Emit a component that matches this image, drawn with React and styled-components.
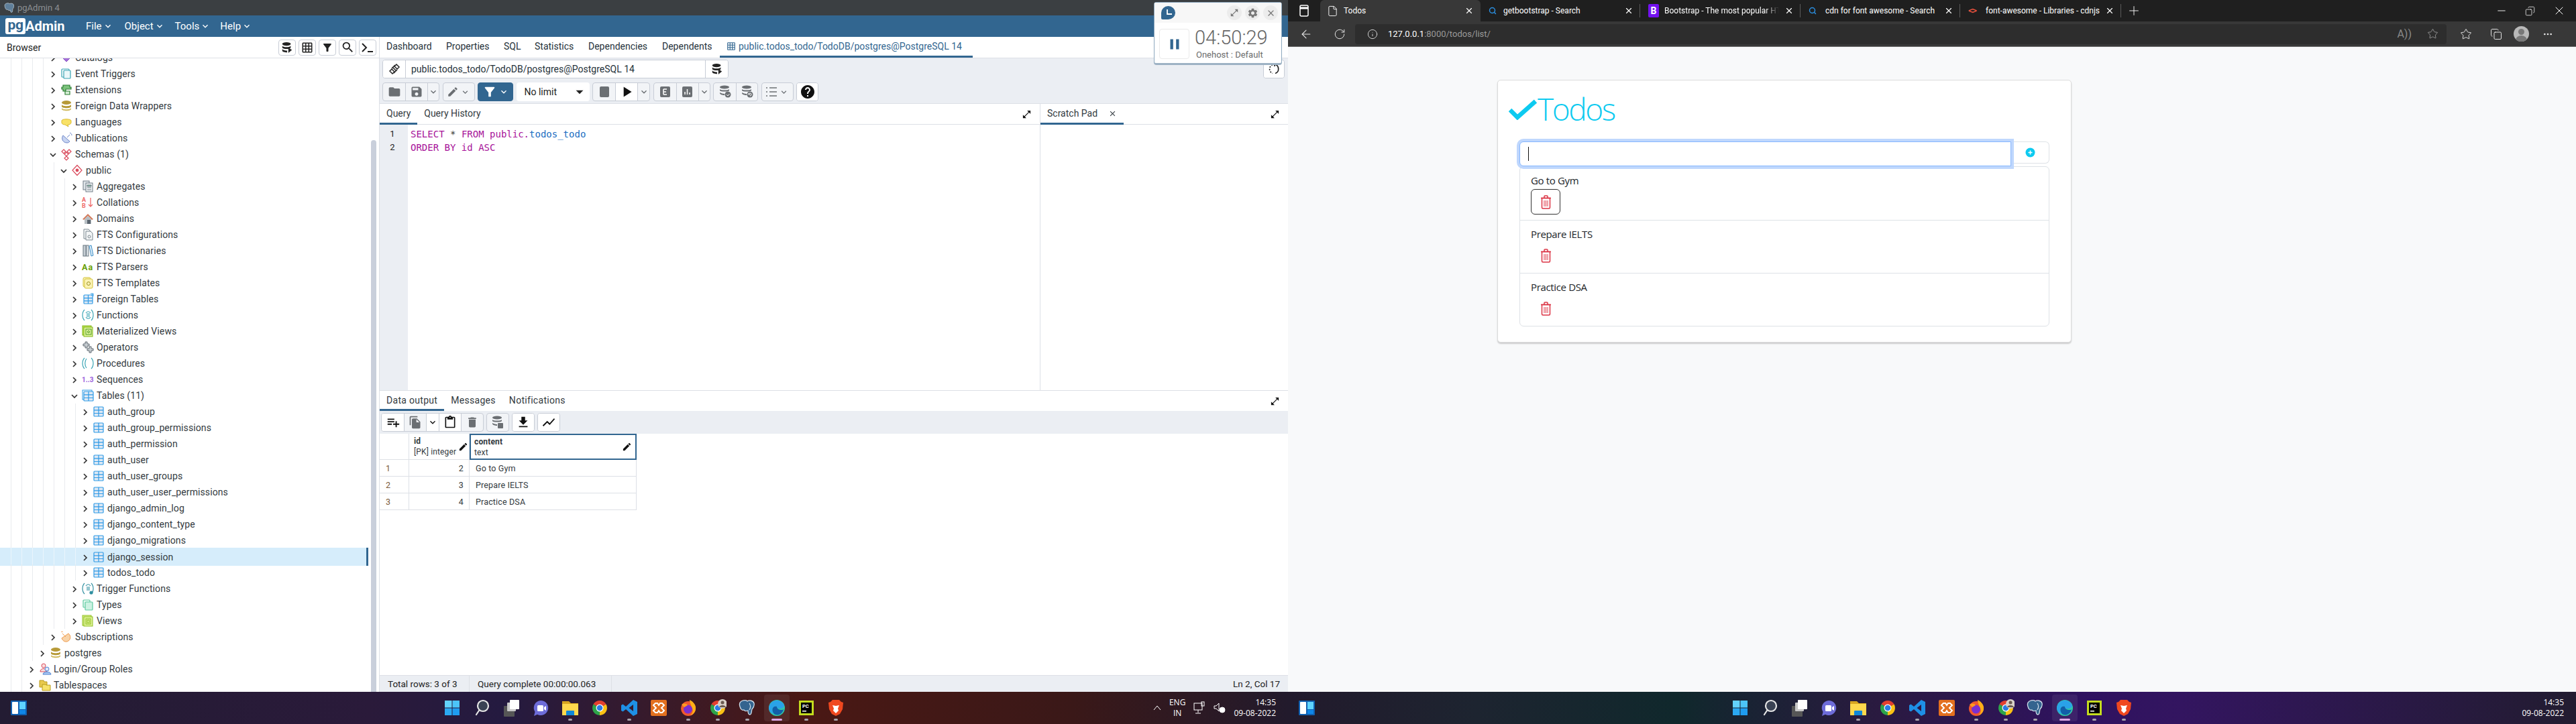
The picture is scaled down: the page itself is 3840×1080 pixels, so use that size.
import React from "react";
import styled, { createGlobalStyle } from "styled-components";
import {
	MdFolder,
	MdSave,
	MdKeyboardArrowDown,
	MdEdit,
	MdPlayArrow,
	MdHelp,
	MdSearch,
	MdDelete,
	MdFileCopy,
	MdContentPaste,
	MdFileDownload,
	MdShowChart,
	MdPlaylistAdd,
	MdGridOn,
	MdSettings,
	MdClose,
	MdPause,
	MdFilterAlt,
	MdOpenInFull,
	MdArrowDropDown,
} from "react-icons/md";
import { ArrowLeft, RotateCw, Info, X, Plus, Minus, Copy, File, Search, Star, Ellipsis } from "lucide-react";

const BLUE = "#326690";
const PANEL = "#ebeef3";
const LINE = "#dde0e6";

const GlobalStyle = createGlobalStyle`
	html, body {
		margin: 0;
		padding: 0;
		background: #000;
	}
	* {
		box-sizing: border-box;
	}
	body {
		font-family: Roboto, "Liberation Sans", sans-serif;
	}
`;

const TREE = [
	{ name: "Catalogs", d: 2, icon: "catalog" },
	{ name: "Event Triggers", d: 2, icon: "event" },
	{ name: "Extensions", d: 2, icon: "ext" },
	{ name: "Foreign Data Wrappers", d: 2, icon: "fdw" },
	{ name: "Languages", d: 2, icon: "lang" },
	{ name: "Publications", d: 2, icon: "pub" },
	{ name: "Schemas (1)", d: 2, icon: "schemas", open: true },
	{ name: "public", d: 3, icon: "public", open: true },
	{ name: "Aggregates", d: 4, icon: "agg" },
	{ name: "Collations", d: 4, icon: "coll" },
	{ name: "Domains", d: 4, icon: "domain" },
	{ name: "FTS Configurations", d: 4, icon: "ftsconf" },
	{ name: "FTS Dictionaries", d: 4, icon: "ftsdict" },
	{ name: "FTS Parsers", d: 4, icon: "parser" },
	{ name: "FTS Templates", d: 4, icon: "ftstpl" },
	{ name: "Foreign Tables", d: 4, icon: "ftable" },
	{ name: "Functions", d: 4, icon: "func" },
	{ name: "Materialized Views", d: 4, icon: "matview" },
	{ name: "Operators", d: 4, icon: "oper" },
	{ name: "Procedures", d: 4, icon: "proc" },
	{ name: "Sequences", d: 4, icon: "seq" },
	{ name: "Tables (11)", d: 4, icon: "tables", open: true },
	{ name: "auth_group", d: 5, icon: "table" },
	{ name: "auth_group_permissions", d: 5, icon: "table" },
	{ name: "auth_permission", d: 5, icon: "table" },
	{ name: "auth_user", d: 5, icon: "table" },
	{ name: "auth_user_groups", d: 5, icon: "table" },
	{ name: "auth_user_user_permissions", d: 5, icon: "table" },
	{ name: "django_admin_log", d: 5, icon: "table" },
	{ name: "django_content_type", d: 5, icon: "table" },
	{ name: "django_migrations", d: 5, icon: "table" },
	{ name: "django_session", d: 5, icon: "table", selected: true },
	{ name: "todos_todo", d: 5, icon: "table" },
	{ name: "Trigger Functions", d: 4, icon: "trigger" },
	{ name: "Types", d: 4, icon: "types" },
	{ name: "Views", d: 4, icon: "views" },
	{ name: "Subscriptions", d: 2, icon: "subs" },
	{ name: "postgres", d: 1, icon: "db" },
	{ name: "Login/Group Roles", d: 0, icon: "roles" },
	{ name: "Tablespaces", d: 0, icon: "space" },
];

const DbStack = ({ c, e }) => (
	<>
		<ellipse cx="10" cy="5" rx="7" ry="3" fill={c} />
		<path d="M3 8c1 3 13 3 14 0v3c-1 3-13 3-14 0z" fill={c} />
		<path d="M3 13c1 3 13 3 14 0v2c-1 3-13 3-14 0z" fill={e || c} />
	</>
);

const TableGrid = ({ x = 3, y = 3, s = 14 }) => (
	<g fill="#dfe9f5" stroke="#2f9be6" strokeWidth="1.2">
		<rect x={x} y={y} width={s} height={s} rx="1" />
		<path d={`M${x} ${y + s * 0.35}h${s}M${x} ${y + s * 0.68}h${s}M${x + s / 2} ${y}v${s}`} fill="none" />
	</g>
);

const TREE_ICONS = {
	catalog: <path d="M10 6l5 5-5 5-5-5z" fill="#a56fd8" stroke="#8450c0" />,
	event: (
		<g fill="none" stroke="#38a3b3" strokeWidth="1.2">
			<rect x="3" y="3" width="11" height="12" rx="1" />
			<rect x="6" y="5" width="10" height="12" rx="1" fill="#eaf7f9" />
		</g>
	),
	ext: (
		<g fill="#7cc37c" stroke="#2c7d33" strokeWidth="1.2">
			<path d="M5 3h10v3h2v3H9v3H5V9H3V6h2z" />
			<path d="M8 12h7v5H8z" fill="#d6efd6" />
		</g>
	),
	fdw: <DbStack c="#b79a38" e="#cfb95e" />,
	lang: <path d="M3 8c0-3 14-3 14 0v3c0 2-3 3-5 3l1 3-5-3c-2 0-5-1-5-3z" fill="#f9e268" stroke="#d9bb32" />,
	pub: (
		<g fill="#c7d4f1" stroke="#6b84c8">
			<path d="M5 6c-3 4-1 11 6 11 2 0 3-1 4-2z" />
			<path d="M11 9l4-4M15 2c2 1 3 2 3 4" fill="none" />
		</g>
	),
	schemas: (
		<g fill="none" stroke="#d9485a" strokeWidth="1.2">
			<path d="M6 3l3 3-3 3-3-3zM14 3l3 3-3 3-3-3zM10 7l3 3-3 3-3-3zM10 13l3 3-3 3-3-3z" />
		</g>
	),
	public: (
		<g stroke="#d9485a" strokeWidth="1.2" fill="none">
			<path d="M10 2.5l7 7.5-7 7.5L3 10z" />
			<circle cx="10" cy="10" r="1.8" fill="#d9485a" />
		</g>
	),
	agg: (
		<g stroke="#6f7b85" fill="#dfe5e8">
			<rect x="3" y="2" width="9" height="13" />
			<rect x="7" y="5" width="10" height="13" fill="#eef2f4" />
			<path d="M9 8h6v2H9zM9 12h6M9 15h6" fill="#7fbf9a" />
		</g>
	),
	coll: (
		<g>
			<text x="1" y="9" fontSize="9" fontWeight="700" fill="#ee6a6a" fontFamily="Roboto">A</text>
			<text x="1" y="18" fontSize="9" fontWeight="700" fill="#ee6a6a" fontFamily="Roboto">B</text>
			<path d="M14 3v13M11 13l3 3 3-3" fill="none" stroke="#ee6a6a" strokeWidth="1.3" />
		</g>
	),
	domain: (
		<g>
			<path d="M2 11l8-8 8 8-2 1-6-6-6 6z" fill="#d47a5a" />
			<path d="M5 11l5-5 5 5v7H5z" fill="#b8bfc4" />
			<rect x="9" y="12" width="5" height="6" fill="#5c6670" />
		</g>
	),
	ftsconf: (
		<g fill="#f4f6f7" stroke="#7d8991">
			<path d="M4 2h7l3 3v11H4z" />
			<path d="M7 5h7l3 3v10H7z" />
			<circle cx="12" cy="13" r="2" fill="none" />
		</g>
	),
	ftsdict: (
		<g stroke="#3f8fc6" fill="#d9ebf8">
			<rect x="3" y="2" width="4" height="16" fill="#c6ced4" stroke="#66747e" />
			<rect x="8" y="2" width="3" height="16" fill="#eef3f6" stroke="#66747e" />
			<path d="M12 3l3-1 3 15-3 1z" />
		</g>
	),
	parser: <text x="1" y="15" fontSize="12.5" fontWeight="700" fill="#6aa008" fontFamily="Roboto" letterSpacing="1">Aa</text>,
	ftstpl: (
		<g fill="#fbf3b5" stroke="#d4c33c">
			<rect x="3" y="2" width="11" height="14" rx="2" />
			<rect x="5" y="4" width="12" height="14" rx="2" />
			<circle cx="11" cy="11" r="2.5" fill="none" stroke="#9c8f20" />
		</g>
	),
	ftable: (
		<g>
			<TableGrid x={4} y={4} s={13} />
			<path d="M14 2h4v4M18 2l-3 3" stroke="#2f9be6" fill="none" />
		</g>
	),
	func: (
		<g fill="none" stroke="#3aa5b5" strokeWidth="1.2">
			<path d="M5 2c-4 4-4 12 0 16M15 2c4 4 4 12 0 16M7 7c2-3 5-3 7 0M7 13c2 3 5 3 7 0" />
			<path d="M8 8h5M8 10h5M8 12h5" />
		</g>
	),
	matview: (
		<g fill="#c6e85c" stroke="#7fb317">
			<rect x="2" y="2" width="13" height="14" />
			<rect x="4" y="4" width="13" height="14" fill="#dff39a" />
			<rect x="7" y="7" width="8" height="8" fill="none" stroke="#4f9a24" />
			<circle cx="11" cy="11" r="1.5" fill="none" stroke="#4f9a24" />
		</g>
	),
	oper: (
		<g fill="#c8ced2" stroke="#616b72">
			<path d="M6 2h3v3h3v3H9v3H6V8H3V5h3z" />
			<path d="M12 9h3v3h3v3h-3v3h-3v-3H9v-3h3z" />
		</g>
	),
	proc: (
		<g fill="none" stroke="#3aa5b5" strokeWidth="1.2">
			<path d="M5 2c-4 4-4 12 0 16M15 2c4 4 4 12 0 16M8 3c-3 4-3 10 0 14" />
		</g>
	),
	seq: <text x="1" y="14" fontSize="10" fontWeight="700" fill="#9a5fdc" fontFamily="Roboto">1..3</text>,
	tables: (
		<g>
			<rect x="2" y="2" width="14" height="14" fill="none" stroke="#2f9be6" />
			<TableGrid x={4} y={4} s={14} />
		</g>
	),
	table: <TableGrid />,
	trigger: (
		<g fill="none" stroke="#2f8fa0" strokeWidth="1.2">
			<path d="M5 2c-4 4-4 12 0 16M15 2c4 4 4 12 0 16M7 6c2-3 5-3 7 0" />
			<path d="M8 8h5M8 10h5M8 12h5" />
			<circle cx="15" cy="16" r="2" fill="#2f8fa0" />
		</g>
	),
	types: (
		<g fill="#e3f8ef" stroke="#5fcaa0" strokeWidth="1.2">
			<rect x="3" y="3" width="10" height="11" rx="1" />
			<rect x="6" y="6" width="11" height="12" rx="1" fill="#cdf2e2" />
		</g>
	),
	views: (
		<g fill="#dff39a" stroke="#90bf1f">
			<rect x="2" y="2" width="13" height="15" />
			<rect x="4" y="4" width="13" height="14" />
			<rect x="7" y="7" width="7" height="8" fill="none" />
			<rect x="9" y="9" width="3" height="4" fill="none" />
		</g>
	),
	subs: (
		<g fill="#f8d3a8" stroke="#ef9a4d">
			<path d="M13 5c4 3 4 10-2 12-4 1-7-2-8-5z" />
			<path d="M9 10L4 5M2 3c1-1 2-1 3 0" fill="none" />
		</g>
	),
	db: <DbStack c="#b79a38" e="#cfb95e" />,
	roles: (
		<g>
			<circle cx="8" cy="5" r="3" fill="#fbe0e0" stroke="#d9485a" />
			<path d="M3 14c0-6 9-6 10 0z" fill="#fbe0e0" stroke="#d9485a" />
			<circle cx="13" cy="10" r="3" fill="#dbe8fb" stroke="#4a7fd0" />
			<path d="M7 18c0-5 12-5 12 0z" fill="#a9c8f2" stroke="#4a7fd0" />
		</g>
	),
	space: (
		<g fill="#f7e26a" stroke="#b89b1c">
			<path d="M2 3h6l1 2h4v8H2z" fill="#e8c94d" />
			<path d="M6 9h5l1 1h6v8H6z" />
		</g>
	),
};

const Screen = styled.div`
	width: 3840px;
	height: 1080px;
	display: flex;
	flex-direction: column;
	overflow: hidden;
`;

const Desktop = styled.div`
	flex: 1;
	display: flex;
	min-height: 0;
`;

const PgWindow = styled.div`
	position: relative;
	width: 1920px;
	display: flex;
	flex-direction: column;
	background: #fff;
`;

const TitleBar = styled.div`
	height: 23px;
	background: #3b3f42;
	display: flex;
	align-items: center;
	gap: 4px;
	padding-left: 6px;
	color: #8b8f92;
	font-size: 13px;
`;

const NavBar = styled.div`
	height: 32px;
	background: ${BLUE};
	display: flex;
	align-items: center;
	padding-left: 8px;
	color: #fff;
`;

const Logo = styled.div`
	width: 120px;
	display: flex;
	align-items: center;
	font-weight: 700;
	font-size: 20px;
`;

const LogoBox = styled.span`
	background: #fff;
	color: ${BLUE};
	width: 30px;
	height: 24px;
	border-radius: 3px;
	line-height: 20px;
	text-align: center;
	font-size: 21px;
	letter-spacing: -0.5px;
`;

const NavMenu = styled.div`
	display: flex;
	align-items: center;
	margin-right: ${(p) => p.$gap}px;
	font-size: 15px;
	svg {
		margin-left: 1px;
	}
`;

const Workspace = styled.div`
	flex: 1;
	display: flex;
	min-height: 0;
`;

const BrowserPane = styled.div`
	width: 566px;
	display: flex;
	flex-direction: column;
	border-right: 1px solid ${LINE};
`;

const PaneHead = styled.div`
	height: 32px;
	flex: none;
	display: flex;
	align-items: center;
	padding: 0 4px 0 10px;
	font-size: 14px;
	color: #222;
	border-bottom: 1px solid ${LINE};
	position: relative;
	z-index: 1;
	background: #fff;
`;

const PaneTitle = styled.span`
	flex: 1;
`;

const HeadTools = styled.div`
	display: flex;
	gap: 4px;
`;

const HeadBtn = styled.div`
	width: 26px;
	height: 24px;
	border: 1px solid #c8cdd6;
	border-radius: 4px;
	display: flex;
	align-items: center;
	justify-content: center;
	color: #222;
	font-size: 18px;
`;

const TreeWrap = styled.div`
	flex: 1;
	min-height: 0;
	display: flex;
`;

const TreeList = styled.div`
	width: 549px;
	overflow: hidden;
	padding-top: 0;
`;

const TreeInner = styled.div`
	margin-top: -13px;
`;

const ScrollGutter = styled.div`
	flex: 1;
	padding: 122px 4px 0;
`;

const ScrollThumb = styled.div`
	height: 100%;
	background: #c9cfdb;
	border-radius: 4px 4px 0 0;
`;

const Row = styled.div`
	display: flex;
	align-items: center;
	height: ${(p) => (p.$selected ? 27 : 24)}px;
	margin: ${(p) => (p.$selected ? "-1px 0 -2px" : "0")};
	padding-left: 16px;
	background: ${(p) => (p.$selected ? "#d6edfb" : "transparent")};
	border-right: ${(p) => (p.$selected ? `3px solid ${BLUE}` : "0")};
	font-size: 14px;
	color: #333a40;
	letter-spacing: 0.1px;
`;

const Indent = styled.span`
	flex: none;
	align-self: stretch;
	width: ${(p) => (p.$short ? 8 : 16)}px;
	border-left: 1px solid ${(p) => (p.$selected ? "#eaf5fc" : "#e9ebee")};
`;

const Chevron = styled.svg`
	flex: none;
	width: 14px;
	height: 14px;
	margin-top: 2px;
`;

const TreeSvg = styled.svg`
	flex: none;
	width: 20px;
	height: 20px;
	margin: 0 3px;
`;

const TreeRow = ({ item }) => {
	const guides = [];
	for (let i = 0; i < item.d + 1; i++) guides.push(<Indent key={i} $selected={item.selected} />);
	return (
		<Row $selected={item.selected}>
			{guides}
			<Indent $short $selected={item.selected} />
			<Chevron viewBox="0 0 14 14" fill="none" stroke="#333" strokeWidth="1.7">
				<path d={item.open ? "M3 5l4 4 4-4" : "M5 3l4 4-4 4"} />
			</Chevron>
			<TreeSvg viewBox="0 0 20 20">{TREE_ICONS[item.icon]}</TreeSvg>
			{item.name}
		</Row>
	);
};

const MainPane = styled.div`
	flex: 1;
	min-width: 0;
	display: flex;
	flex-direction: column;
`;

const MainTabs = styled.div`
	height: 32px;
	flex: none;
	display: flex;
	padding-left: 0;
	border-bottom: 1px solid ${LINE};
`;

const MainTab = styled.div`
	height: 31px;
	display: flex;
	align-items: center;
	gap: 4px;
	padding: 0 10px;
	width: ${(p) => p.$w}px;
	font-size: 14px;
	white-space: nowrap;
	color: ${(p) => (p.$active ? BLUE : "#26323a")};
	border-bottom: 3px solid ${(p) => (p.$active ? BLUE : "transparent")};
`;

const SqlToolbar = styled.div`
	height: 67px;
	flex: none;
	background: ${PANEL};
	display: flex;
	flex-direction: column;
	gap: 6px;
	padding: 2px 5px 0 4px;
`;

const ToolRow = styled.div`
	display: flex;
	align-items: center;
	gap: 4.5px;
`;

const ConnRow = styled(ToolRow)`
	justify-content: space-between;
`;

const ToolGroup = styled.div`
	display: flex;
	height: 28px;
	flex: none;
	background: ${(p) => (p.$primary ? BLUE : "#f2f4f7")};
	border: 1px solid ${(p) => (p.$primary ? BLUE : "#c8cdd6")};
	border-radius: 4px;
	overflow: hidden;
`;

const ToolCell = styled.div`
	width: ${(p) => p.$w}px;
	flex: none;
	display: flex;
	align-items: center;
	justify-content: center;
	gap: 2px;
	font-size: ${(p) => p.$size || 20}px;
	color: ${(p) => (p.$light ? "#fff" : p.$on ? "#111" : "#6b6f73")};
	background: ${(p) => (p.$on ? "#fff" : "transparent")};
	border-left: ${(p) => (p.$first ? "0" : "1px solid #c8cdd6")};
`;

const ConnText = styled.div`
	width: 448px;
	background: #fff;
	border-left: 1px solid #c8cdd6;
	border-right: 1px solid #c8cdd6;
	display: flex;
	align-items: center;
	padding-left: 8px;
	font-size: 14px;
	color: #26323a;
`;

const LimitSelect = styled.div`
	width: 109px;
	height: 28px;
	background: #fff;
	border-radius: 4px;
	display: flex;
	align-items: center;
	justify-content: space-between;
	padding: 0 2px 0 12px;
	font-size: 14px;
	color: #222;
`;

const SqlArea = styled.div`
	flex: 1;
	min-height: 0;
	display: flex;
	border-top: 1px solid ${LINE};
`;

const SubPanel = styled.div`
	width: ${(p) => p.$w}px;
	display: flex;
	flex-direction: column;
	border-left: ${(p) => (p.$divided ? `1px solid ${LINE}` : "0")};
`;

const SubTabs = styled.div`
	height: 31px;
	flex: none;
	display: flex;
	align-items: stretch;
	justify-content: space-between;
	border-bottom: 1px solid ${LINE};
	padding-right: 12px;
`;

const TabGroup = styled.div`
	display: flex;
`;

const SubTab = styled.div`
	display: flex;
	align-items: center;
	gap: 16px;
	height: 31px;
	padding: 0 10px;
	font-size: 14px;
	color: #333a40;
	border-bottom: 3px solid ${(p) => (p.$active ? BLUE : "transparent")};
`;

const ExpandBtn = styled.div`
	display: flex;
	align-items: center;
	font-size: 15px;
	color: #111;
`;

const Editor = styled.div`
	flex: 1;
	display: flex;
	min-height: 0;
`;

const Gutter = styled.div`
	width: 42px;
	background: ${PANEL};
	padding-top: 4px;
`;

const LineNo = styled.div`
	height: 20px;
	line-height: 20px;
	text-align: center;
	font-size: 13px;
	color: #222;
	padding-right: 4px;
`;

const Code = styled.div`
	padding: 4px 0 0 4px;
	font-family: "DejaVu Sans Mono", monospace;
	font-size: 14px;
`;

const CodeLine = styled.div`
	height: 20px;
	line-height: 20px;
	color: #333;
	white-space: pre;
`;

const Keyword = styled.span`
	color: #a8139a;
`;

const Ident = styled.span`
	color: #1b6ec2;
`;

const DataArea = styled.div`
	height: 450px;
	flex: none;
	display: flex;
	flex-direction: column;
	border-top: 1px solid ${LINE};
`;

const DataTabs = styled.div`
	height: 30px;
	flex: none;
	display: flex;
	justify-content: space-between;
	padding-right: 12px;
`;

const DataTab = styled(SubTab)`
	height: 30px;
	letter-spacing: 0.3px;
`;

const DataToolbar = styled.div`
	height: 34px;
	flex: none;
	background: ${PANEL};
	display: flex;
	align-items: center;
	gap: 4px;
	padding-left: 2px;
`;

const GridBox = styled.div`
	flex: 1;
	min-height: 0;
`;

const GridRow = styled.div`
	display: grid;
	grid-template-columns: 44px 90px 249px;
	width: 383px;
	height: ${(p) => (p.$head ? 39 : 25)}px;
	font-size: 12.5px;
	color: #333a40;
	letter-spacing: 0.15px;
`;

const GridCell = styled.div`
	display: flex;
	align-items: center;
	justify-content: ${(p) => (p.$right ? "flex-end" : "flex-start")};
	padding: 0 ${(p) => (p.$right ? 8 : 9)}px;
	border-right: 1px solid ${LINE};
	border-bottom: 1px solid ${LINE};
	color: ${(p) => (p.$num ? "#7a5a3a" : "inherit")};
`;

const HeadCell = styled.div`
	display: flex;
	align-items: center;
	justify-content: space-between;
	padding: 0 ${(p) => (p.$picked ? 5 : 1)}px 0 ${(p) => (p.$picked ? 5 : 7)}px;
	border: ${(p) => (p.$picked ? `2px solid ${BLUE}` : "0")};
	border-right: ${(p) => (p.$picked ? `2px solid ${BLUE}` : `1px solid ${LINE}`)};
	border-bottom: ${(p) => (p.$picked ? `2px solid ${BLUE}` : `1px solid ${LINE}`)};
	font-size: 15px;
	color: #111;
`;

const HeadLabel = styled.div`
	font-size: 12px;
	line-height: 16px;
	color: #333a40;
	white-space: nowrap;
	b {
		display: block;
		font-weight: 700;
	}
`;

const StatusBar = styled.div`
	height: 25px;
	flex: none;
	display: flex;
	background: ${PANEL};
	border-top: 1px solid ${LINE};
	font-size: 13.5px;
	color: #222;
`;

const StatusCell = styled.div`
	display: flex;
	align-items: center;
	padding: 0 12px;
	border-right: ${(p) => (p.$end ? "0" : `1px solid ${LINE}`)};
	margin-left: ${(p) => (p.$end ? "auto" : "0")};
	width: ${(p) => (p.$w ? `${p.$w}px` : "auto")};
`;

const TimerPopup = styled.div`
	position: absolute;
	top: 3px;
	left: 1720px;
	width: 191px;
	height: 94px;
	background: #fff;
	border: 1px solid #8ea9bf;
	border-bottom: 3px solid #9db2c4;
	border-radius: 4px;
	z-index: 5;
`;

const TimerHead = styled.div`
	height: 30px;
	background: #f7f7f7;
	display: flex;
	align-items: center;
	padding: 0 5px 0 10px;
	gap: 5px;
`;

const TimerLogo = styled.div`
	width: 21px;
	height: 20px;
	background: ${BLUE};
	border-radius: 50% 50% 50% 10%;
	margin-right: auto;
	display: flex;
	align-items: center;
	justify-content: center;
`;

const RoundBtn = styled.div`
	width: 22px;
	height: 22px;
	border-radius: 50%;
	background: #ececec;
	display: flex;
	align-items: center;
	justify-content: center;
	color: #777;
	font-size: 14px;
`;

const TimerBody = styled.div`
	display: flex;
	gap: 8px;
	padding: 9px 0 0 7px;
`;

const PauseBtn = styled.div`
	width: 45px;
	height: 45px;
	border: 1px solid #eaeaea;
	border-radius: 4px;
	display: flex;
	align-items: center;
	justify-content: center;
	color: ${BLUE};
	font-size: 26px;
`;

const TimerText = styled.div`
	display: flex;
	flex-direction: column;
`;

const TimerClock = styled.div`
	font-size: 29px;
	font-weight: 300;
	line-height: 32px;
	color: #666;
	margin-top: -3px;
`;

const TimerHost = styled.div`
	font-size: 13px;
	line-height: 16px;
	margin: 2px 0 0 2px;
	color: #6b6b6b;
`;

const EdgeWindow = styled.div`
	width: 1920px;
	display: flex;
	flex-direction: column;
	background: #f8f9fa;
	font-family: "Open Sans", sans-serif;
`;

const TabStrip = styled.div`
	height: 32px;
	flex: none;
	display: flex;
	background: #1f1f1f;
	color: #fff;
`;

const SideBtn = styled.div`
	width: 48px;
	display: flex;
	align-items: center;
	justify-content: center;
`;

const EdgeTab = styled.div`
	position: relative;
	width: ${(p) => p.$w}px;
	flex: none;
	display: flex;
	align-items: center;
	gap: 8px;
	padding: 0 10px 0 ${(p) => (p.$active ? 10 : 12)}px;
	background: ${(p) => (p.$active ? "#383838" : "transparent")};
	border-radius: 6px 6px 0 0;
	font-family: Roboto, sans-serif;
	font-size: 12px;
	&::after {
		content: "";
		display: ${(p) => (p.$active ? "none" : "block")};
		position: absolute;
		right: 0;
		top: 6px;
		bottom: 6px;
		width: 1px;
		background: #5a5a5a;
	}
`;

const TabTitle = styled.span`
	flex: 1;
	min-width: 0;
	white-space: nowrap;
	margin-left: ${(p) => p.$shift || 0}px;
	mask-image: ${(p) => (p.$fade ? "linear-gradient(90deg,#000 88%,transparent)" : "none")};
`;

const BootstrapIcon = styled.span`
	width: 16px;
	height: 20px;
	border-radius: 2px;
	background: #7311f0;
	color: #fff;
	font-size: 14px;
	font-weight: 700;
	line-height: 20px;
	text-align: center;
`;

const CodeGlyph = styled.span`
	width: 16px;
	color: #e8543f;
	font-size: 12px;
	font-weight: 700;
	font-family: "DejaVu Sans Mono", monospace;
	letter-spacing: -1.5px;
`;

const NewTab = styled.div`
	width: 38px;
	display: flex;
	align-items: center;
	justify-content: center;
`;

const WindowBtns = styled.div`
	margin-left: auto;
	display: flex;
	align-items: center;
	gap: 26px;
	padding-right: 15px;
`;

const AddressRow = styled.div`
	height: 38px;
	flex: none;
	display: flex;
	align-items: center;
	background: #383838;
	border-bottom: 1px solid #6b6b6b;
	color: #e6e6e6;
`;

const NavBtn = styled.div`
	width: ${(p) => p.$w}px;
	flex: none;
	display: flex;
	align-items: center;
	justify-content: center;
`;

const AddressBox = styled.div`
	width: 1627px;
	height: 30px;
	flex: none;
	background: #2d2d2d;
	border-radius: 4px;
	display: flex;
	align-items: center;
	padding: 0 12px 0 18px;
	gap: 15px;
	font-family: Roboto, sans-serif;
	font-size: 13px;
`;

const Url = styled.span`
	flex: 1;
	color: #9a9a9a;
	b {
		font-weight: 400;
		color: #fff;
	}
`;

const ReadAloud = styled.span`
	color: #8a8a8a;
	font-size: 16px;
	margin-right: 8px;
`;

const Avatar = styled.div`
	width: 23px;
	height: 23px;
	border-radius: 50%;
	background: #b9b9b9;
	position: relative;
	overflow: hidden;
	margin: 0 12px 0 10px;
	&::before {
		content: "";
		position: absolute;
		left: 7px;
		top: 4px;
		width: 9px;
		height: 9px;
		border-radius: 50%;
		background: #787878;
	}
	&::after {
		content: "";
		position: absolute;
		left: 3px;
		top: 14px;
		width: 17px;
		height: 14px;
		border-radius: 50%;
		background: #787878;
	}
`;

const Page = styled.div`
	flex: 1;
	padding: 49px 0 0 312px;
`;

const Card = styled.div`
	width: 856px;
	height: 392px;
	background: #fff;
	border: 1px solid #dcdcdc;
	border-radius: 5px;
	box-shadow: 0 2px 2px rgba(0, 0, 0, 0.18);
	padding: 0 32px;
`;

const Heading = styled.div`
	height: 81px;
	margin: 0 0 10px -16px;
	padding-top: 2px;
	display: flex;
	align-items: center;
	color: #0dcaf0;
	font-weight: 300;
	font-size: 46px;
	letter-spacing: -2.4px;
`;

const Check = styled.svg`
	width: 43px;
	height: 31px;
	margin-top: 4px;
`;

const InputRow = styled.div`
	display: flex;
	align-items: flex-start;
	height: 37px;
`;

const TaskInput = styled.div`
	position: relative;
	z-index: 1;
	width: 733px;
	height: 37px;
	background: #fff;
	border: 1px solid #86b7fe;
	border-radius: 6px 0 0 6px;
	box-shadow: 0 0 0 4px #bfd7fd;
	display: flex;
	align-items: center;
	padding-left: 12px;
`;

const Caret = styled.span`
	width: 1px;
	height: 21px;
	background: #111;
`;

const AddBtn = styled.div`
	width: 57px;
	height: 33px;
	background: #fff;
	border: 1px solid #dee2e6;
	border-left: 0;
	border-radius: 0 6px 6px 0;
	display: flex;
	align-items: center;
	justify-content: center;
`;

const TodoList = styled.div`
	border: 1px solid #dee2e6;
	border-radius: 6px;
`;

const TodoItem = styled.div`
	height: 79px;
	padding: 8px 16px 0;
	border-top: ${(p) => (p.$first ? "0" : "1px solid #dee2e6")};
`;

const TodoText = styled.div`
	height: 24px;
	line-height: 24px;
	font-size: 15px;
	letter-spacing: -0.35px;
	color: #212529;
`;

const TrashBtn = styled.div`
	width: 44px;
	height: 38px;
	margin-top: 1px;
	border: 1px solid ${(p) => (p.$focus ? "#333" : "transparent")};
	border-radius: 6px;
	display: flex;
	align-items: center;
	justify-content: center;
`;

const Taskbar = styled.div`
	height: 48px;
	flex: none;
	display: flex;
	background: linear-gradient(
		90deg,
		#231c33 0,
		#2a1a3a 550px,
		#241a40 750px,
		#3a1a28 1000px,
		#4a1814 1200px,
		#3a1818 1600px,
		#221a2c 1920px,
		#1d2430 2200px,
		#10282c 2500px,
		#2a1a40 2800px,
		#2f1260 3100px,
		#331560 3250px,
		#221c30 3840px
	);
`;

const TaskSide = styled.div`
	position: relative;
	width: 1920px;
	display: flex;
	align-items: center;
	justify-content: center;
`;

const WidgetBtn = styled.svg`
	position: absolute;
	left: 16px;
	top: 13px;
	width: 24px;
	height: 22px;
`;

const TaskIcons = styled.div`
	display: flex;
`;

const TaskSlot = styled.div`
	position: relative;
	width: 44px;
	height: 48px;
	display: flex;
	align-items: center;
	justify-content: center;
	&::before {
		content: "";
		display: ${(p) => (p.$active ? "block" : "none")};
		position: absolute;
		left: 3px;
		right: 3px;
		top: 4px;
		bottom: 4px;
		border-radius: 4px;
		background: rgba(255, 255, 255, 0.07);
	}
	&::after {
		content: "";
		display: ${(p) => (p.$running || p.$active ? "block" : "none")};
		position: absolute;
		bottom: 5px;
		left: 50%;
		width: ${(p) => (p.$active ? 16 : 6)}px;
		height: 3px;
		margin-left: ${(p) => (p.$active ? -8 : -3)}px;
		border-radius: 2px;
		background: ${(p) => (p.$active ? "#dba6e6" : "#a8a4ac")};
	}
`;

const TaskSvg = styled.svg`
	position: relative;
	width: 26px;
	height: 26px;
`;

const Tray = styled.div`
	position: absolute;
	right: 18px;
	top: 0;
	bottom: 0;
	display: flex;
	align-items: center;
	gap: 12px;
	color: #fff;
	font-family: "Open Sans", sans-serif;
	font-size: 12px;
`;

const TrayLang = styled.div`
	text-align: center;
	line-height: 16px;
`;

const Clock = styled.div`
	text-align: right;
	line-height: 16px;
`;

const TASK_APPS = [
	{
		key: "win",
		art: (
			<g fill="#35b6f5">
				<rect x="2" y="2" width="10.5" height="10.5" fill="#63d2fb" />
				<rect x="13.5" y="2" width="10.5" height="10.5" fill="#4cc4f8" />
				<rect x="2" y="13.5" width="10.5" height="10.5" fill="#2ba9f2" />
				<rect x="13.5" y="13.5" width="10.5" height="10.5" fill="#1f9cf0" />
			</g>
		),
	},
	{
		key: "search",
		art: (
			<g fill="#3a4254" stroke="#e6e6e6" strokeWidth="2.2">
				<circle cx="15" cy="10" r="8" />
				<path d="M9 17l-4 6" strokeLinecap="round" />
			</g>
		),
	},
	{
		key: "view",
		art: (
			<g>
				<rect x="2" y="10" width="16" height="16" rx="1" fill="#565656" />
				<rect x="7" y="5" width="13" height="13" rx="1" fill="#c8c8c8" />
				<rect x="11" y="1" width="14" height="14" rx="1" fill="#fff" />
			</g>
		),
	},
	{
		key: "teams",
		art: (
			<g>
				<path d="M13 2a11 11 0 1 1-5 20.7L3 25l1.500-6A11 11 0 0 1 13 2z" fill="#6d6cd8" />
				<rect x="8" y="9" width="9" height="9" rx="1.500" fill="#fff" />
				<path d="M18 12l3-2v7l-3-2z" fill="#fff" />
			</g>
		),
	},
	{
		key: "files",
		running: true,
		art: (
			<g>
				<path d="M1 3h10l3 3h11v4H1z" fill="#d8a520" />
				<rect x="1" y="7" width="24" height="17" fill="#ffd84d" />
				<path d="M8 17h10a1 1 0 0 1 1 1v6H7v-6a1 1 0 0 1 1-1z" fill="#0f87d8" />
			</g>
		),
	},
	{ key: "chrome", chrome: true },
	{
		key: "code",
		running: true,
		art: (
			<path
				fillRule="evenodd"
				d="M19 1l6 3v18l-6 3L8 15l-4.500 3.500L1 17V9l2.500-1.500L8 11zM19 8l-6.500 5 6.500 5z"
				fill="#1e90e6"
			/>
		),
	},
	{
		key: "xampp",
		art: (
			<g>
				<rect x="1" y="1" width="24" height="24" rx="2" fill="#e3701f" />
				<path d="M8 6h3l2 3 2-3h3l3 3-4 4 4 4-3 3h-3l-2-3-2 3H8l-3-3 4-4-4-4z" fill="none" stroke="#fff" strokeWidth="2" />
			</g>
		),
	},
	{
		key: "firefox",
		running: true,
		art: (
			<g>
				<circle cx="13" cy="14" r="11" fill="#f0582e" />
				<path d="M15 1c6 3 10 8 9 14-1 5-4 8-8 9 4-3 5-8 2-12-1-4-3-7-3-11z" fill="#ffb017" />
				<circle cx="12.500" cy="15" r="6.500" fill="#7a2fd0" />
				<path d="M3 8c3-2 7-2 9 1l-5 3z" fill="#ff9a20" />
			</g>
		),
	},
	{ key: "chrome2", chrome: true, running: true, badge: true },
	{
		key: "pg",
		running: true,
		art: (
			<g fill="#34648f" stroke="#cfdde8" strokeWidth="1.300">
				<path d="M4 3c5-2 8-1 9 0 3-2 9-1 10 3 1 5-2 8-3 9-1 2 0 7-3 8-3 0-3-3-3-6-3 1-5 1-6-1-3 1-5-1-6-5C1 8 1 5 4 3z" />
				<path d="M16 6c2 3 2 7 0 10" fill="none" />
			</g>
		),
	},
	{
		key: "edge",
		active: true,
		art: (
			<g>
				<circle cx="13" cy="13" r="12" fill="#2fc6a8" />
				<path d="M1 13A12 12 0 0 1 24 9c0 3-3 5-7 5-3 0-4-1-4-3C7 9 4 16 9 22 4 21 1 17 1 13z" fill="#2aa2e8" />
				<path d="M9 22C4 16 7 9 13 11c0 3 3 5 7 5 1 0 2 0 3-1-1 6-8 11-14 7z" fill="#125ea8" />
			</g>
		),
	},
	{
		key: "pycharm",
		running: true,
		art: (
			<g>
				<rect x="2" y="2" width="22" height="22" fill="#c4dc1e" />
				<rect x="5" y="5" width="16" height="16" fill="#000" />
				<text x="7" y="13" fontSize="7.500" fontFamily="Roboto" fontWeight="700" fill="#fff">PC</text>
				<rect x="7" y="17" width="6" height="1.500" fill="#fff" />
			</g>
		),
	},
	{
		key: "brave",
		running: true,
		art: (
			<g>
				<path d="M8 1h10l3 3 3 1-1 10-4 7-6 3-6-3-4-7L2 5l3-1z" fill="#f0481f" />
				<path d="M8 9l5 1 5-1-2 5 1 3-4 4-4-4 1-3z" fill="#fff" />
			</g>
		),
	},
];

const ChromeArt = ({ badge }) => (
	<>
		<g transform="translate(1 1)">
			<path d="M12 12L2.500 6.500A11 11 0 0 1 21.500 6.500Z" fill="#e3402f" />
			<path d="M12 12L21.500 6.500A11 11 0 0 1 12 23Z" fill="#fbc114" />
			<path d="M12 12L12 23A11 11 0 0 1 2.500 6.500Z" fill="#2da44a" />
			<circle cx="12" cy="12" r="5.500" fill="#fff" />
			<circle cx="12" cy="12" r="4.300" fill="#2c7ce5" />
		</g>
		{badge && (
			<g>
				<circle cx="20" cy="7" r="7" fill="#d8d0c8" />
				<circle cx="20" cy="5" r="2.500" fill="#6a5a50" />
				<path d="M15 12c1-4 9-4 10 0z" fill="#6a5a50" />
			</g>
		)}
	</>
);

const TaskApps = () => (
	<TaskIcons>
		{TASK_APPS.map((app) => (
			<TaskSlot key={app.key} $running={app.running} $active={app.active}>
				<TaskSvg viewBox="0 0 26 26">{app.chrome ? <ChromeArt badge={app.badge} /> : app.art}</TaskSvg>
			</TaskSlot>
		))}
	</TaskIcons>
);

const Widgets = () => (
	<WidgetBtn viewBox="0 0 24 22">
		<rect width="24" height="22" rx="1" fill="#0f5fb0" />
		<rect x="2" y="2" width="9" height="18" rx="1" fill="#fff" />
		<rect x="13" y="2" width="9" height="11" fill="#5fd4ff" />
		<rect x="13" y="14" width="9" height="6" fill="#0f86e8" />
	</WidgetBtn>
);

const DbRun = () => (
	<svg width="18" height="18" viewBox="0 0 20 20" fill="#222">
		<ellipse cx="9" cy="4" rx="7" ry="3" />
		<path d="M2 7c1 3 13 3 14 0v3c-1 3-13 3-14 0z" />
		<path d="M2 12c1 3 6 3 8 3v3c-4 0-8-1-8-3z" />
		<path d="M12 10l6 4-6 5z" />
	</svg>
);

const Trash = () => (
	<svg width="17" height="21" viewBox="0 0 17 21" fill="none" stroke="#dc3545" strokeWidth="1.500">
		<path d="M1 4.500h15M6 4.500V2a1 1 0 0 1 1-1h3a1 1 0 0 1 1 1v2.500" />
		<path d="M2.500 4.500v14a1.500 1.500 0 0 0 1.500 1.500h9a1.500 1.500 0 0 0 1.500-1.500v-14z" />
		<path d="M6 8v9M8.500 8v9M11 8v9" strokeWidth="1" />
	</svg>
);

const TODOS = ["Go to Gym", "Prepare IELTS", "Practice DSA"];
const RESULT = [
	{ n: 1, id: 2, text: "Go to Gym" },
	{ n: 2, id: 3, text: "Prepare IELTS" },
	{ n: 3, id: 4, text: "Practice DSA" },
];
const MAIN_TABS = [
	["Dashboard", 89],
	["Properties", 86],
	["SQL", 46],
	["Statistics", 80],
	["Dependencies", 110],
	["Dependents", 96],
];

const App = () => {
	return (
		<Screen>
			<GlobalStyle />
			<Desktop>
				<PgWindow>
					<TitleBar>
						<svg width="16" height="18" viewBox="0 0 20 20" fill="#5f7f9a" stroke="#b9c4cc">
							<path d="M3 2c4-2 6-1 7 0 3-1 7-1 8 2 1 4-1 7-2 8 0 3 0 6-2 6s-2-2-2-4c-3 1-4 0-5-1-2 1-4-1-5-4C1 6 1 3 3 2z" />
						</svg>
						pgAdmin 4
					</TitleBar>
					<NavBar>
						<Logo>
							<LogoBox>pg</LogoBox>
							Admin
						</Logo>
						<NavMenu $gap={17}>File<MdKeyboardArrowDown size={16} /></NavMenu>
						<NavMenu $gap={15}>Object<MdKeyboardArrowDown size={16} /></NavMenu>
						<NavMenu $gap={14}>Tools<MdKeyboardArrowDown size={16} /></NavMenu>
						<NavMenu $gap={0}>Help<MdKeyboardArrowDown size={16} /></NavMenu>
					</NavBar>
					<Workspace>
						<BrowserPane>
							<PaneHead>
								<PaneTitle>Browser</PaneTitle>
								<HeadTools>
									<HeadBtn><DbRun /></HeadBtn>
									<HeadBtn><MdGridOn /></HeadBtn>
									<HeadBtn><MdFilterAlt /></HeadBtn>
									<HeadBtn><MdSearch size={21} /></HeadBtn>
									<HeadBtn>
										<svg width="20" height="16" viewBox="0 0 20 16" fill="none" stroke="#222" strokeWidth="2">
											<path d="M2 2l6 6-6 6M10 14h8" />
										</svg>
									</HeadBtn>
								</HeadTools>
							</PaneHead>
							<TreeWrap>
								<TreeList>
									<TreeInner>
										{TREE.map((item) => (
											<TreeRow key={item.name} item={item} />
										))}
									</TreeInner>
								</TreeList>
								<ScrollGutter>
									<ScrollThumb />
								</ScrollGutter>
							</TreeWrap>
						</BrowserPane>
						<MainPane>
							<MainTabs>
								{MAIN_TABS.map(([label, w]) => (
									<MainTab key={label} $w={w}>{label}</MainTab>
								))}
								<MainTab $active $w={377}>
									<MdGridOn size={14} />
									public.todos_todo/TodoDB/postgres@PostgreSQL 14
								</MainTab>
							</MainTabs>
							<SqlToolbar>
								<ConnRow>
									<ToolGroup>
										<ToolCell $first $on $w={33} $size={18}>
											<svg width="18" height="18" viewBox="0 0 18 18" fill="none" stroke="#222" strokeWidth="1.500">
												<path d="M2 12l4 4 3-3-4-4zM9 5l4 4 3-3-4-4zM5 8l5-5M8 15l5-5M7 7l4 4" />
											</svg>
										</ToolCell>
										<ConnText>public.todos_todo/TodoDB/postgres@PostgreSQL 14</ConnText>
										<ToolCell $first $on $w={33}><DbRun /></ToolCell>
									</ToolGroup>
									<ToolGroup>
										<ToolCell $first $on $w={30}>
											<svg width="18" height="18" viewBox="0 0 18 18" fill="none" stroke="#222" strokeWidth="1.700">
												<path d="M10 2a7 7 0 0 1 1 13.500" />
												<path d="M7 2.500a7 7 0 0 0 0 13" strokeDasharray="2 2" />
												<path d="M10 1v4M9 3l3-2" />
											</svg>
										</ToolCell>
									</ToolGroup>
								</ConnRow>
								<ToolRow>
									<ToolGroup>
										<ToolCell $first $w={33}><MdFolder /></ToolCell>
										<ToolCell $w={33}><MdSave /></ToolCell>
										<ToolCell $w={17} $size={16}><MdKeyboardArrowDown /></ToolCell>
									</ToolGroup>
									<ToolGroup>
										<ToolCell $first $w={46} $size={18}><MdEdit /><MdKeyboardArrowDown size={15} /></ToolCell>
									</ToolGroup>
									<ToolGroup $primary>
										<ToolCell $first $light $w={51} $size={20}>
											<MdFilterAlt size={22} /><MdKeyboardArrowDown size={16} />
										</ToolCell>
									</ToolGroup>
									<LimitSelect>No limit<MdArrowDropDown size={26} color="#222" /></LimitSelect>
									<ToolGroup>
										<ToolCell $first $w={33} $size={18}>
											<svg width="14" height="16" viewBox="0 0 14 16"><rect width="14" height="16" rx="2" fill="#6b6f73" /></svg>
										</ToolCell>
										<ToolCell $on $w={33} $size={26}><MdPlayArrow /></ToolCell>
										<ToolCell $w={18} $size={16}><MdKeyboardArrowDown /></ToolCell>
									</ToolGroup>
									<ToolGroup>
										<ToolCell $first $w={33} $size={18}>
											<svg width="15" height="16" viewBox="0 0 15 16">
												<rect width="15" height="16" rx="2" fill="#6b6f73" />
												<path d="M5 4h5M5 8h4M5 12h5M5 4v8" stroke="#fff" strokeWidth="1.500" />
											</svg>
										</ToolCell>
										<ToolCell $w={33} $size={18}>
											<svg width="15" height="16" viewBox="0 0 15 16">
												<rect width="15" height="16" rx="2" fill="#6b6f73" />
												<path d="M4 12V8M7.500 12V4M11 12V9" stroke="#fff" strokeWidth="1.500" />
											</svg>
										</ToolCell>
										<ToolCell $w={17} $size={16}><MdKeyboardArrowDown /></ToolCell>
									</ToolGroup>
									<ToolGroup>
										<ToolCell $first $w={33}>
											<svg width="18" height="20" viewBox="0 0 18 20" fill="#6b6f73">
												<ellipse cx="8" cy="3" rx="7" ry="2.500" />
												<path d="M1 6c1 2 13 2 14 0v2c-1 2-13 2-14 0zM1 11c1 1 6 2 7 2v2c-3 0-7-1-7-3z" />
												<circle cx="13" cy="14" r="4.500" />
												<path d="M11 14l2 2 2.500-3" stroke="#fff" fill="none" />
											</svg>
										</ToolCell>
										<ToolCell $w={32}>
											<svg width="18" height="20" viewBox="0 0 18 20" fill="#6b6f73">
												<ellipse cx="8" cy="3" rx="7" ry="2.500" />
												<path d="M1 6c1 2 13 2 14 0v2c-1 2-13 2-14 0zM1 11c1 1 6 2 7 2v2c-3 0-7-1-7-3z" />
												<circle cx="13" cy="14" r="4.500" />
												<path d="M11 14a2 2 0 1 1 2 2M11 12v2h2" stroke="#fff" fill="none" />
											</svg>
										</ToolCell>
									</ToolGroup>
									<ToolGroup>
										<ToolCell $first $w={46} $size={15}>
											<svg width="18" height="16" viewBox="0 0 18 16" fill="none" stroke="#6b6f73" strokeWidth="1.300">
												<path d="M6 2h11M6 8h11M6 14h11M1 2h2M1 8h2M1 14h2" />
											</svg>
											<MdKeyboardArrowDown />
										</ToolCell>
									</ToolGroup>
									<ToolGroup>
										<ToolCell $first $on $w={31} $size={24}><MdHelp /></ToolCell>
									</ToolGroup>
								</ToolRow>
							</SqlToolbar>
							<SqlArea>
								<SubPanel $w={984}>
									<SubTabs>
										<TabGroup>
											<SubTab $active>Query</SubTab>
											<SubTab>Query History</SubTab>
										</TabGroup>
										<ExpandBtn><MdOpenInFull /></ExpandBtn>
									</SubTabs>
									<Editor>
										<Gutter>
											<LineNo>1</LineNo>
											<LineNo>2</LineNo>
										</Gutter>
										<Code>
											<CodeLine><Keyword>SELECT</Keyword> * <Keyword>FROM</Keyword> <Keyword>public.</Keyword><Ident>todos_todo</Ident></CodeLine>
											<CodeLine><Keyword>ORDER BY id ASC</Keyword></CodeLine>
										</Code>
									</Editor>
								</SubPanel>
								<SubPanel $w={370} $divided>
									<SubTabs>
										<TabGroup>
											<SubTab $active>Scratch Pad <MdClose size={13} /></SubTab>
										</TabGroup>
										<ExpandBtn><MdOpenInFull /></ExpandBtn>
									</SubTabs>
								</SubPanel>
							</SqlArea>
							<DataArea>
								<DataTabs>
									<TabGroup>
										<DataTab $active>Data output</DataTab>
										<DataTab>Messages</DataTab>
										<DataTab>Notifications</DataTab>
									</TabGroup>
									<ExpandBtn><MdOpenInFull /></ExpandBtn>
								</DataTabs>
								<DataToolbar>
									<ToolGroup>
										<ToolCell $first $on $w={33} $size={22}><MdPlaylistAdd /></ToolCell>
										<ToolCell $w={33} $size={20}><MdFileCopy /></ToolCell>
										<ToolCell $on $w={19} $size={16}><MdKeyboardArrowDown /></ToolCell>
										<ToolCell $on $w={33} $size={20}><MdContentPaste /></ToolCell>
										<ToolCell $w={33} $size={20}><MdDelete /></ToolCell>
									</ToolGroup>
									<ToolGroup>
										<ToolCell $first $w={32}>
											<svg width="18" height="20" viewBox="0 0 18 20" fill="#6b6f73">
												<ellipse cx="8" cy="3" rx="7" ry="2.500" />
												<path d="M1 6c1 2 13 2 14 0v2c-1 2-13 2-14 0zM1 11c1 1 6 2 7 2v2c-3 0-7-1-7-3z" />
												<rect x="9" y="11" width="8" height="8" rx="1" />
											</svg>
										</ToolCell>
									</ToolGroup>
									<ToolGroup>
										<ToolCell $first $on $w={32} $size={22}><MdFileDownload /></ToolCell>
									</ToolGroup>
									<ToolGroup>
										<ToolCell $first $on $w={32} $size={22}><MdShowChart /></ToolCell>
									</ToolGroup>
								</DataToolbar>
								<GridBox>
									<GridRow $head>
										<GridCell />
										<HeadCell>
											<HeadLabel><b>id</b>[PK] integer</HeadLabel>
											<MdEdit />
										</HeadCell>
										<HeadCell $picked>
											<HeadLabel><b>content</b>text</HeadLabel>
											<MdEdit />
										</HeadCell>
									</GridRow>
									{RESULT.map((r) => (
										<GridRow key={r.n}>
											<GridCell $num>{r.n}</GridCell>
											<GridCell $right>{r.id}</GridCell>
											<GridCell>{r.text}</GridCell>
										</GridRow>
									))}
								</GridBox>
								<StatusBar>
									<StatusCell $w={134}>Total rows: 3 of 3</StatusCell>
									<StatusCell $w={212}>Query complete 00:00:00.063</StatusCell>
									<StatusCell $end>Ln 2, Col 17</StatusCell>
								</StatusBar>
							</DataArea>
						</MainPane>
					</Workspace>
					<TimerPopup>
						<TimerHead>
							<TimerLogo>
								<svg width="12" height="12" viewBox="0 0 12 12" fill="none" stroke="#fff" strokeWidth="1.800">
									<path d="M4 1v7h7" />
								</svg>
							</TimerLogo>
							<RoundBtn><MdOpenInFull /></RoundBtn>
							<RoundBtn><MdSettings size={17} /></RoundBtn>
							<RoundBtn><MdClose size={15} /></RoundBtn>
						</TimerHead>
						<TimerBody>
							<PauseBtn><MdPause /></PauseBtn>
							<TimerText>
								<TimerClock>04:50:29</TimerClock>
								<TimerHost>Onehost : Default</TimerHost>
							</TimerText>
						</TimerBody>
					</TimerPopup>
				</PgWindow>
				<EdgeWindow>
					<TabStrip>
						<SideBtn>
							<svg width="16" height="20" viewBox="0 0 16 20" fill="none" stroke="#fff" strokeWidth="1.500">
								<rect x="2" y="2" width="12" height="16" rx="2" />
								<path d="M2 6h12" strokeWidth="3" />
							</svg>
						</SideBtn>
						<EdgeTab $active $w={239}>
							<File size={17} strokeWidth={1.3} />
							<TabTitle>Todos</TabTitle>
							<X size={14} />
						</EdgeTab>
						<EdgeTab $w={238}>
							<Search size={12} color="#2b8fe0" strokeWidth={3} />
							<TabTitle $shift={2}>getbootstrap - Search</TabTitle>
							<X size={14} />
						</EdgeTab>
						<EdgeTab $w={239}>
							<BootstrapIcon>B</BootstrapIcon>
							<TabTitle $fade>Bootstrap - The most popular HT</TabTitle>
							<X size={14} />
						</EdgeTab>
						<EdgeTab $w={238}>
							<Search size={12} color="#2b8fe0" strokeWidth={3} />
							<TabTitle $shift={5}>cdn for font awesome - Search</TabTitle>
							<X size={14} />
						</EdgeTab>
						<EdgeTab $w={240}>
							<CodeGlyph>&lt;&gt;</CodeGlyph>
							<TabTitle $shift={2}>font-awesome - Libraries - cdnjs</TabTitle>
							<X size={14} />
						</EdgeTab>
						<NewTab><Plus size={22} strokeWidth={1} /></NewTab>
						<WindowBtns>
							<Minus size={18} strokeWidth={1.2} />
							<Copy size={15} strokeWidth={1.2} style={{ transform: "scaleX(-1)" }} />
							<X size={20} strokeWidth={1.2} />
						</WindowBtns>
					</TabStrip>
					<AddressRow>
						<NavBtn $w={54}><ArrowLeft size={20} strokeWidth={1.3} /></NavBtn>
						<NavBtn $w={46}><RotateCw size={18} strokeWidth={1.3} /></NavBtn>
						<AddressBox>
							<Info size={16} strokeWidth={1.3} />
							<Url><b>127.0.0.1</b>:8000/todos/list/</Url>
							<ReadAloud>A))</ReadAloud>
							<Star size={17} color="#999" strokeWidth={1.3} />
						</AddressBox>
						<NavBtn $w={58}><Star size={18} strokeWidth={1.3} /></NavBtn>
						<NavBtn $w={32}><Copy size={18} strokeWidth={1.3} /></NavBtn>
						<Avatar />
						<NavBtn $w={32}><Ellipsis size={16} /></NavBtn>
					</AddressRow>
					<Page>
						<Card>
							<Heading>
								<Check viewBox="0 0 43 31" fill="none" stroke="#0dcaf0" strokeWidth="6.500">
									<path d="M2 16l11 11L40 3" />
								</Check>
								Todos
							</Heading>
							<InputRow>
								<TaskInput><Caret /></TaskInput>
								<AddBtn>
									<svg width="15" height="15" viewBox="0 0 15 15">
										<circle cx="7.500" cy="7.500" r="7" fill="#0dcaf0" />
										<path d="M7.500 4.500v6M4.500 7.500h6" stroke="#fff" strokeWidth="1.500" />
									</svg>
								</AddBtn>
							</InputRow>
							<TodoList>
								{TODOS.map((text, i) => (
									<TodoItem key={text} $first={i === 0}>
										<TodoText>{text}</TodoText>
										<TrashBtn $focus={i === 0}><Trash /></TrashBtn>
									</TodoItem>
								))}
							</TodoList>
						</Card>
					</Page>
				</EdgeWindow>
			</Desktop>
			<Taskbar>
				<TaskSide>
					<Widgets />
					<TaskApps />
					<Tray>
						<svg width="12" height="8" viewBox="0 0 12 8" fill="none" stroke="#fff">
							<path d="M1 7l5-6 5 6" />
						</svg>
						<TrayLang>ENG<br />IN</TrayLang>
						<svg width="18" height="20" viewBox="0 0 18 20" fill="none" stroke="#fff">
							<rect x="1" y="3" width="12" height="10" />
							<rect x="12" y="1" width="4" height="6" />
							<path d="M7 13v4M3 18h8" />
						</svg>
						<svg width="18" height="20" viewBox="0 0 18 20" fill="none" stroke="#fff">
							<path d="M1 7h3l4-4v12l-4-4H1z" />
							<circle cx="13" cy="13" r="4" fill="#fff" />
						</svg>
						<Clock>14:35<br />09-08-2022</Clock>
					</Tray>
				</TaskSide>
				<TaskSide>
					<Widgets />
					<TaskApps />
					<Tray>
						<Clock>14:35<br />09-08-2022</Clock>
					</Tray>
				</TaskSide>
			</Taskbar>
		</Screen>
	);
};

export default App;
